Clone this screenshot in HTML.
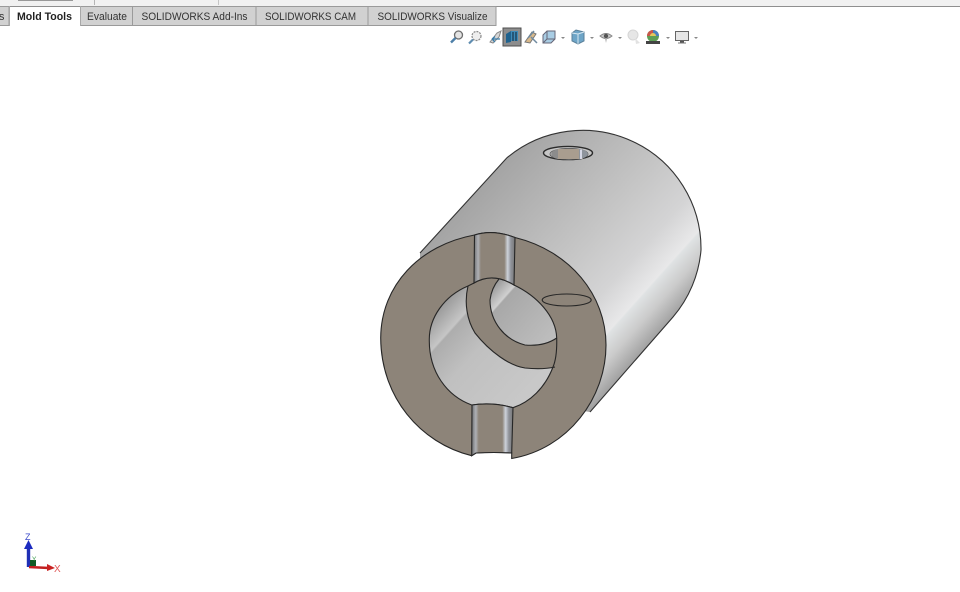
<!DOCTYPE html>
<html><head><meta charset="utf-8"><style>
html,body{margin:0;padding:0;background:#fff;width:960px;height:592px;overflow:hidden}
svg{position:absolute;left:0;top:0}
text{font-family:"Liberation Sans",sans-serif}
</style></head><body>
<svg width="960" height="592" viewBox="0 0 960 592">
<defs>
<linearGradient id="b" gradientUnits="userSpaceOnUse" x1="420" y1="253" x2="593" y2="408">
<stop offset="0" stop-color="#a4a4a4"/><stop offset=".2" stop-color="#b2b2b2"/><stop offset=".5" stop-color="#c6c6c6"/><stop offset=".7" stop-color="#d4d4d5"/><stop offset=".83" stop-color="#e8e8e9"/><stop offset=".837" stop-color="#dfe2e3"/><stop offset=".91" stop-color="#cbcbcb"/><stop offset="1" stop-color="#a0a0a0"/>
</linearGradient>
<linearGradient id="i" gradientUnits="userSpaceOnUse" x1="440" y1="295" x2="537" y2="382">
<stop offset="0" stop-color="#8a8a8a"/><stop offset=".235" stop-color="#c6c6c6"/><stop offset=".25" stop-color="#adadad"/><stop offset=".5" stop-color="#c0c0c0"/><stop offset="1" stop-color="#c8c8c8"/>
</linearGradient>
<linearGradient id="i2" gradientUnits="userSpaceOnUse" x1="495" y1="280" x2="555" y2="333">
<stop offset="0" stop-color="#909090"/><stop offset=".23" stop-color="#d0d0d0"/><stop offset=".25" stop-color="#a8a8a8"/><stop offset="1" stop-color="#bdbdbd"/>
</linearGradient>
<linearGradient id="n" x1="0" x2="1" y1="0" y2="0">
<stop offset="0" stop-color="#6f7072"/><stop offset=".1" stop-color="#aeb0b5"/><stop offset=".17" stop-color="#8d8479"/><stop offset=".74" stop-color="#8d8479"/><stop offset=".82" stop-color="#cdd2da"/><stop offset=".9" stop-color="#8f9299"/><stop offset="1" stop-color="#777"/>
</linearGradient>
</defs>

<!-- top chrome -->
<rect x="0" y="0" width="960" height="6" fill="#f1f1f1"/>
<rect x="0" y="6" width="960" height="1" fill="#8f8f8f"/>
<rect x="94" y="0" width="1" height="5" fill="#b5b5b5"/><rect x="218" y="0" width="1" height="5" fill="#c5c5c5"/>
<rect x="18" y="0" width="55" height="1" fill="#999"/>
<g stroke="#9a9a9a" fill="#d1d1d1">
<rect x="-5" y="6.5" width="14" height="19"/>
<rect x="80.5" y="6.5" width="52" height="19"/>
<rect x="132.5" y="6.5" width="123.5" height="19"/>
<rect x="256" y="6.5" width="112" height="19"/>
<rect x="368" y="6.5" width="128" height="19"/>
</g>
<rect x="9" y="7" width="71" height="19" fill="#fff"/>
<rect x="9" y="6" width="1" height="20" fill="#a8a8a8"/><rect x="80" y="6" width="1" height="20" fill="#a8a8a8"/>
<g font-size="10.8" fill="#333">
<text x="-1" y="20">s</text>
<text x="17" y="20" font-weight="bold" fill="#222" textLength="55" lengthAdjust="spacingAndGlyphs">Mold Tools</text>
<text x="87" y="20" textLength="40" lengthAdjust="spacingAndGlyphs">Evaluate</text>
<text x="141.5" y="20" textLength="106" lengthAdjust="spacingAndGlyphs">SOLIDWORKS Add-Ins</text>
<text x="265" y="20" textLength="91" lengthAdjust="spacingAndGlyphs">SOLIDWORKS CAM</text>
<text x="377.5" y="20" textLength="110" lengthAdjust="spacingAndGlyphs">SOLIDWORKS Visualize</text>
</g>

<!-- heads-up toolbar -->
<g>
<circle cx="458.5" cy="35" r="4" fill="#e4e4e4" stroke="#6d6d6d" stroke-width="1.3"/>
<path d="M455.5 38 L451 42.5" stroke="#4d7fa8" stroke-width="2.4"/>
<circle cx="476.5" cy="36" r="4.5" fill="#eee" stroke="#8a8a8a" stroke-width="1.2" stroke-dasharray="2 1"/>
<path d="M473 39.5 L469 43.5" stroke="#5f8db0" stroke-width="2.2"/>
<path d="M490 42 L497 33 L501 31 L499 37 L493 43 Z" fill="#d6d6d6" stroke="#888"/>
<path d="M492 39 H500 M492 39 L495 36.5 M492 39 L495 42" stroke="#3b7ca8" stroke-width="1.3" fill="none"/>
<rect x="503" y="28" width="18" height="18" fill="#8d8d8d" stroke="#4f4f4f"/>
<path d="M506 34 L511 31 V42 L506 43 Z" fill="#1f628e"/><path d="M511 31 H518 V41 H511 Z" fill="#3d8ab8"/><path d="M513 32 V41 M516 32 V41" stroke="#123" stroke-width="1"/>
<path d="M525 42 L532 32 L536 34 L530 43 Z" fill="#d9b98a" stroke="#777"/>
<path d="M531 37 L537 43 M534 31 L528 38" stroke="#6f8aa0" stroke-width="1.5"/>
<path d="M543 35 L547 31 H555 V39 L551 43 H543 Z" fill="#a9cde4" stroke="#667"/><path d="M547 31 V39 H555 M547 39 L543 43" stroke="#667" fill="none"/>
<path d="M561 37 h4 l-2 2 z" fill="#888"/>
<path d="M572 33 L576 30 L584 32 V41 L578 44 L572 41 Z" fill="#6ea5c7" stroke="#5a7f98"/><path d="M578 34 V44 M578 34 L584 32 M578 34 L572 33" stroke="#d7e7f0" fill="none"/>
<path d="M590 37 h4 l-2 2 z" fill="#888"/>
<path d="M600 36 Q606 31 612 36 Q606 41 600 36 Z" fill="#c8c8c8" stroke="#888"/><circle cx="606" cy="36" r="2.2" fill="#555"/><path d="M605 38 L606 43 L607 38" fill="#aaa"/>
<path d="M618 37 h4 l-2 2 z" fill="#888"/>
<circle cx="633" cy="35" r="5" fill="#e6e6e6" stroke="#d5d5d5"/><path d="M635 38 L640 43 L636 44 Z" fill="#e2e2e2"/>
<circle cx="653" cy="36" r="6" fill="#5e9e55"/><path d="M653 30 A6 6 0 0 1 659 36 H653 Z" fill="#4a7fc0"/><path d="M647 36 A6 6 0 0 1 653 30 V36 Z" fill="#c9574a"/><path d="M653 33 A3 3 0 0 1 656 36 H650 A3 3 0 0 1 653 33" fill="#e2c85b"/>
<rect x="646" y="41" width="14" height="3" fill="#444"/>
<path d="M666 37 h4 l-2 2 z" fill="#888"/>
<rect x="675.5" y="31.5" width="13" height="9" fill="#e6e6e6" stroke="#666"/><rect x="680" y="41" width="4" height="1.5" fill="#555"/><rect x="678" y="42.5" width="8" height="1" fill="#777"/>
<path d="M694 37 h4 l-2 2 z" fill="#888"/>
</g>

<!-- cylinder body -->
<path d="M420 253 L506.7 158 A118.3 118.3 0 0 1 701 250 A118.3 118.3 0 0 1 673 317 L590 412 L510 400 L420 300 Z" fill="url(#b)"/>
<path d="M420 253 L506.7 158 A118.3 118.3 0 0 1 701 250 A118.3 118.3 0 0 1 673 317 L590 412" fill="none" stroke="#333" stroke-width="1.1"/>

<!-- top hole -->
<ellipse cx="568" cy="153" rx="24.5" ry="6.6" fill="#c6c6c6" stroke="#2b2b2b" stroke-width="1.4"/>
<ellipse cx="569" cy="154" rx="19" ry="5.6" fill="#d8d8d8" stroke="#555" stroke-width=".9"/>
<path d="M557 149 H580 L583 159 H557 Z" fill="#a99d8f"/>
<path d="M551 154 Q552 150 558 149 V159 Q552 158 551 154 Z" fill="#8c8c8c"/>
<path d="M579 149 Q587 150 588 154 Q587 158 579 159 Z" fill="#8e949c"/>
<path d="M581 149.5 V159" stroke="#eef" stroke-width="1.5"/>

<!-- front face -->
<path fill="#8d8479" stroke="#262626" stroke-width="1.1" d="M474.5 235 Q493 229 515 237.5 C570 251 606 295 606 345 C606 398 568 449 511.7 458.5 L511.7 453 Q494 452 476 453 L471.7 455.7 C420 443 381 397 380.7 338 C381 285 420 245 474.5 235 Z"/>

<!-- bore -->
<path id="bp" d="M468 286 L474 283 Q493 272 514 285 C537 296 556 316 556.7 338 C557 350 556 360 553 367 C545 388 530 402 513 407.7 Q493 402 471.7 405 C447 396 429 372 429.3 340 C429 318 444 296 468 286 Z" fill="url(#i)"/>
<!-- inner hole -->
<path d="M499 279 L514 285 C537 296 556 316 556.7 338 C548 344 537 346 525 345 C510 342 498 335 494 318 C490 310 490 305 490 300 C491 292 494 285 499 279 Z" fill="url(#i2)"/>
<!-- brown band -->
<path d="M468 286 L474 283 Q486 277 499 279 C494 285 491 292 490 300 C490 322 505 340 525 345 C537 346 548 344 556.7 338 C557 350 556 360 555 367 C546 369 535 369 525 368 C510 366 490 352 475 333 C467 320 464 303 468 286 Z" fill="#8d8479"/>
<path d="M468 286 C464 303 467 320 475 333 C490 352 510 366 525 368 C535 369 546 369 555 367" fill="none" stroke="#262626" stroke-width="1.1"/>
<path d="M499 279 C494 285 491 292 490 300 C490 322 505 340 525 345 C537 346 548 344 556.7 338" fill="none" stroke="#262626" stroke-width="1.1"/>
<path d="M468 286 L474 283 Q493 272 514 285 C537 296 556 316 556.7 338 C557 350 556 360 553 367 C545 388 530 402 513 407.7 Q493 402 471.7 405 C447 396 429 372 429.3 340 C429 318 444 296 468 286 Z" fill="none" stroke="#262626" stroke-width="1.1"/>

<!-- top notch -->
<path d="M474.5 235 Q493 229 515 237.5 L514 285 Q493 272 474 283 Z" fill="url(#n)" stroke="#262626" stroke-width="1.1"/>
<!-- bottom notch -->
<path d="M472 405 Q493 402 513 407.7 L511.7 453 Q494 452 476 453 L471.7 455.7 Z" fill="url(#n)" stroke="#262626" stroke-width="1.1"/>

<!-- side ellipse -->
<ellipse cx="566.7" cy="300" rx="24.5" ry="6" fill="#8d8479" stroke="#262626" stroke-width="1.1"/>

<!-- triad -->
<path d="M28.5 567 V548" stroke="#1f2fb5" stroke-width="3.4"/>
<path d="M24 549 L28.5 540 L33 549 Z" fill="#1c2bc0"/>
<path d="M29 567 L49 568" stroke="#c22020" stroke-width="2.6"/>
<path d="M47 564 L55 568 L47 571 Z" fill="#c92222"/>
<rect x="30" y="560" width="6" height="6" fill="#0f5a24"/>
<text x="25" y="540" font-size="9" fill="#3a49c9">Z</text>
<text x="32" y="561" font-size="6.5" fill="#3c9a4b">Y</text>
<text x="54" y="572" font-size="10" fill="#e05a5a">X</text>
</svg>
</body></html>
